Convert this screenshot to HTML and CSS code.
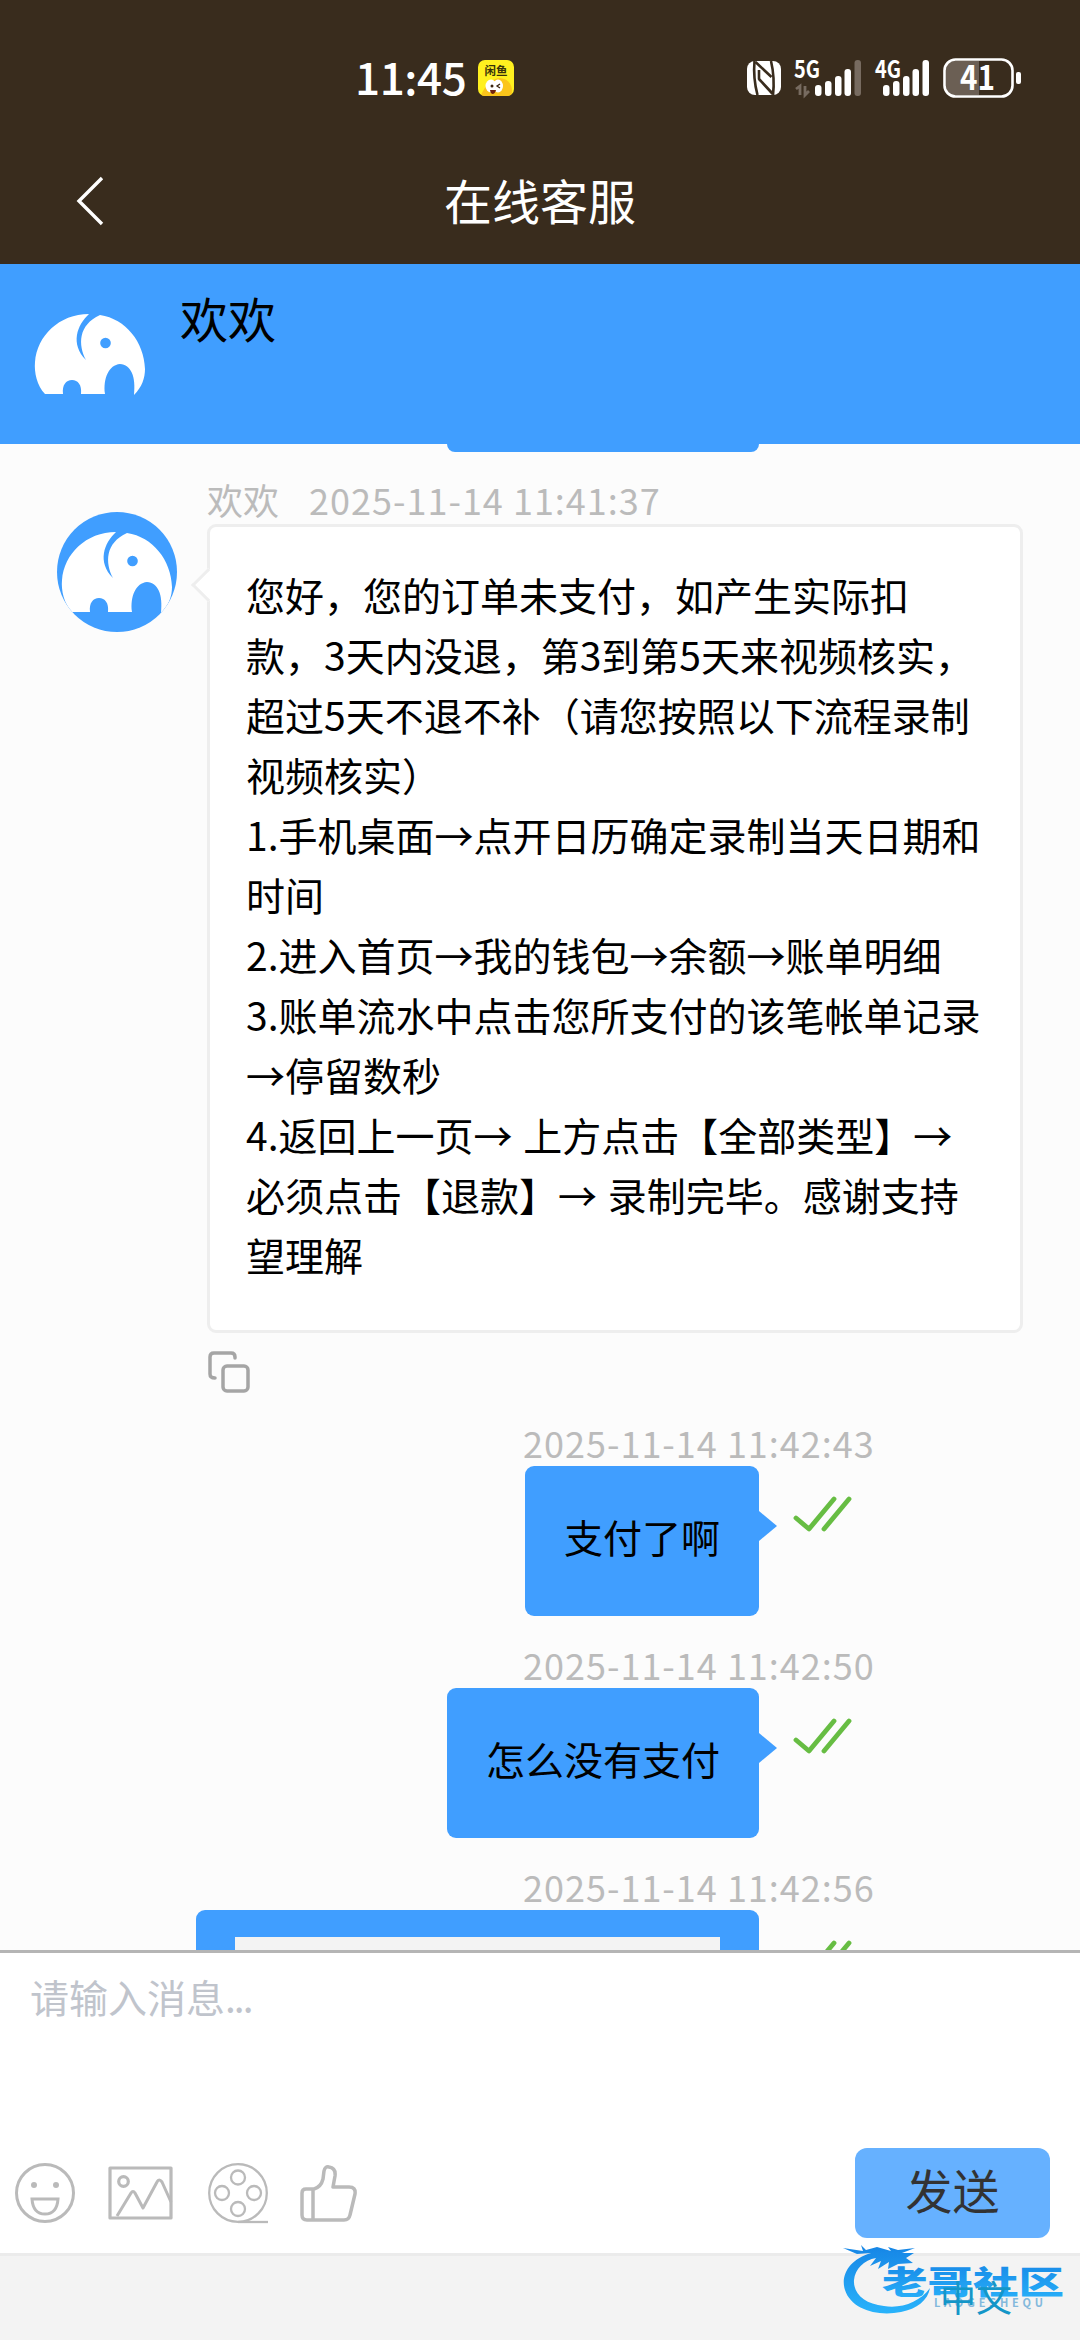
FILE: index.html
```html
<!DOCTYPE html>
<html lang="zh-CN">
  <head>
    <meta charset="UTF-8" />
    <meta name="viewport" content="width=device-width, initial-scale=1.0" />
    <title>在线客服</title>
    <link rel="stylesheet" href="styles.css">
  </head>
  <body>
    <svg class="defs" aria-hidden="true">
      <symbol id="elephant" viewBox="0 0 120 120">
        <path fill="#fff" d="M15 100C7 92 4 78 5 68C7 42 29 20 59 20C47 31 40 50 56 66C48 51 48 31 70 21C96 25 114 48 115 75C115 84 112 93 104 101C106 82 101 71 90 70C79 71 73 84 75 100H51C52 91 48 86 42 86C36 86 32 91 33 100Z"/>
        <circle cx="75.500" cy="49" r="5.300" fill="#409eff"/>
      </symbol>
      <symbol id="checks" viewBox="0 0 60 38">
        <path d="M4 23L17 34L42 4M32 34L57 4" fill="none" stroke="#67bd43" stroke-width="4.800" stroke-linecap="round" stroke-linejoin="round"/>
      </symbol>
    </svg>

    <div class="phone">
      <header class="top">
        <div class="status">
          <span class="status__time">11:45</span>
          <span class="status__app">
            <b>闲鱼</b>
            <svg viewBox="0 0 36 20">
              <path d="M2 20C7 9 12 2 22 1C32 2 36 10 33 20Z" fill="#fbc51b"/>
              <ellipse cx="13" cy="9" rx="5.500" ry="6.500" fill="#fff"/>
              <ellipse cx="20" cy="9" rx="5" ry="6.500" fill="#fff"/>
              <circle cx="14" cy="9" r="1.500" fill="#3b2410"/>
              <path d="M22 7L19 9L22 11" fill="none" stroke="#3b2410" stroke-width="1.300"/>
              <path d="M12 13H18Q17 17 14.500 17Q12 16 12 13Z" fill="#72240f"/>
            </svg>
          </span>
          <svg class="status__icons" viewBox="0 0 280 44">
            <rect x="2" y="5" width="34" height="34" rx="8" fill="#fff"/>
            <g fill="none" stroke="#392c1d" stroke-width="2.600" stroke-linejoin="round">
              <path d="M9.500 5Q8 22 12.500 39"/>
              <path d="M26 5Q30 22 28 39"/>
              <path d="M10.500 6L26.500 21M14 14V23L27.500 38M14 23L27 37" />
            </g>
            <text x="49" y="22" class="net" textLength="26" lengthAdjust="spacingAndGlyphs">5G</text>
            <path d="M51 33L55 30V39M60 30V39L64 35" fill="none" stroke="#776b60" stroke-width="2.800"/>
            <g fill="#fff">
              <rect x="70" y="29" width="6.500" height="11" rx="3"/>
              <rect x="80" y="25" width="6.500" height="15" rx="3"/>
              <rect x="90" y="20" width="6.500" height="20" rx="3"/>
              <rect x="99.500" y="13" width="6.500" height="27" rx="3"/>
              <rect x="109.500" y="4" width="6.500" height="36" rx="3" fill="#776b60"/>
            </g>
            <text x="130" y="22" class="net" textLength="26" lengthAdjust="spacingAndGlyphs">4G</text>
            <g fill="#fff">
              <rect x="138" y="29" width="6.500" height="11" rx="3"/>
              <rect x="148" y="25" width="6.500" height="15" rx="3"/>
              <rect x="158" y="20" width="6.500" height="20" rx="3"/>
              <rect x="167.500" y="13" width="6.500" height="27" rx="3"/>
              <rect x="177.500" y="4" width="6.500" height="36" rx="3"/>
            </g>
            <path d="M234 5H209Q201 5 201 14V30Q201 39 209 39H234Z" fill="#6b5f54"/>
            <rect x="199.500" y="3.500" width="68" height="37" rx="11" fill="none" stroke="#fff" stroke-width="2.600"/>
            <rect x="271" y="16" width="5" height="12" rx="2" fill="#fff"/>
            <text x="215" y="34" class="level" textLength="35" lengthAdjust="spacingAndGlyphs">41</text>
          </svg>
        </div>
        <div class="title">
          <svg class="title__back" viewBox="0 0 30 52"><path d="M27 3L4 26L27 49" fill="none" stroke="#fff" stroke-width="3.400"/></svg>
          <h1>在线客服</h1>
        </div>
      </header>

      <section class="agent">
        <svg class="agent__avatar"><use href="#elephant"/></svg>
        <div class="agent__name">欢欢</div>
      </section>

      <main class="chat">
        <div class="bubble bubble_tail"></div>

        <div class="msg msg_in">
          <svg class="msg__avatar"><use href="#elephant"/></svg>
          <div class="msg__body">
            <div class="msg__meta"><span>欢欢</span><time>2025-11-14 11:41:37</time></div>
            <div class="bubble bubble_in">您好，您的订单未支付，如产生实际扣<br>款，3天内没退，第3到第5天来视频核实，<br>超过5天不退不补（请您按照以下流程录制<br>视频核实）<br>1.手机桌面→点开日历确定录制当天日期和<br>时间<br>2.进入首页→我的钱包→余额→账单明细<br>3.账单流水中点击您所支付的该笔帐单记录<br>→停留数秒<br>4.返回上一页→ 上方点击【全部类型】→<br>必须点击【退款】→ 录制完毕。感谢支持<br>望理解</div>
            <svg class="msg__copy" viewBox="0 0 42 42" fill="none" stroke="#a5a5a5" stroke-width="3.500" stroke-linecap="round">
              <path d="M27 7V6Q27 2 23 2H6Q2 2 2 6V23Q2 27 7 27"/>
              <rect x="15" y="15" width="25" height="25" rx="4"/>
            </svg>
          </div>
        </div>

        <div class="msg msg_out">
          <time>2025-11-14 11:42:43</time>
          <div class="msg__row">
            <div class="bubble bubble_out">支付了啊</div>
            <svg class="msg__checks"><use href="#checks"/></svg>
          </div>
        </div>

        <div class="msg msg_out">
          <time>2025-11-14 11:42:50</time>
          <div class="msg__row">
            <div class="bubble bubble_out">怎么没有支付</div>
            <svg class="msg__checks"><use href="#checks"/></svg>
          </div>
        </div>

        <div class="msg msg_out">
          <time>2025-11-14 11:42:56</time>
          <div class="msg__row">
            <div class="bubble bubble_out bubble_image"><div class="shot"></div></div>
            <svg class="msg__checks"><use href="#checks"/></svg>
          </div>
        </div>
      </main>

      <section class="editor">
        <div class="editor__text">请输入消息<span>...</span></div>
        <div class="tools">
          <svg class="tools__smile" viewBox="0 0 60 60" fill="none" stroke="#bababa" stroke-width="3">
            <circle cx="30" cy="30" r="28.500"/>
            <path d="M17 36H43Q42 51 30 51Q18 51 17 36Z"/>
            <circle cx="19" cy="22" r="3" fill="#bababa" stroke="none"/>
            <circle cx="41" cy="22" r="3" fill="#bababa" stroke="none"/>
          </svg>
          <svg class="tools__image" viewBox="0 0 65 54" fill="none" stroke="#bababa" stroke-width="3.200" stroke-linejoin="round">
            <rect x="2" y="2" width="61" height="50"/>
            <circle cx="15.500" cy="15.500" r="4.800"/>
            <path d="M9 50L23 27Q25 24 27 27L35 42L49 16Q51 12 54 16L63 36" stroke-width="3"/>
          </svg>
          <svg class="tools__reel" viewBox="0 0 60 61" fill="none" stroke="#bababa" stroke-width="2.300">
            <circle cx="30" cy="30" r="28.800"/>
            <circle cx="30" cy="14.500" r="7"/>
            <circle cx="14" cy="30" r="7"/>
            <circle cx="46" cy="30" r="7"/>
            <circle cx="30" cy="46" r="7"/>
            <path d="M30 59H60"/>
          </svg>
          <svg class="tools__like" viewBox="0 0 57 58" fill="none" stroke="#bababa" stroke-width="3.500" stroke-linejoin="round">
            <path d="M6 25H14Q21 23 23 15L24 7Q25 2 29 3Q36 4 35 12L33 23H49Q56 23 55 30L50 51Q49 56 44 56H7Q2 56 2 51V29Q2 25 6 25ZM13 25V56"/>
          </svg>
          <button class="send" type="button">发送</button>
        </div>
      </section>

      <footer class="lang">
        <svg class="brand" viewBox="0 0 230 76">
          <defs>
            <linearGradient id="blue" x1="0" y1="0" x2="0" y2="1">
              <stop offset="0" stop-color="#1685e5"/>
              <stop offset="1" stop-color="#29b3fb"/>
            </linearGradient>
          </defs>
          <path fill="url(#blue)" d="M31 9C10 15 0 31 5 46C11 65 37 73 61 68C77 65 88 56 90 44C80 58 61 65 44 62C24 60 13 49 14 36C15 25 24 16 36 14L30 22L41 17L38 25L49 18L48 25L58 20L73 19L66 14L74 9L62 9L75 4L58 6L48 3L51 7L37 3L26 6L21 1L23 7L3 4L17 10Z"/>
          <text class="brand__cn" x="42" y="72" transform="scale(1 0.700)" textLength="182" lengthAdjust="spacingAndGlyphs" fill="url(#blue)">老哥社区</text>
          <text class="brand__en" x="94" y="63" textLength="109">LAOGESHEQU</text>
        </svg>
        <span class="lang__name">中文</span>
      </footer>
    </div>
  </body>
</html>
```
FILE: styles.css
```css
* {
  box-sizing: border-box;
}
body {
  margin: 0;
  font-family: "Noto Sans CJK SC", sans-serif;
  color: #000;
}
svg {
  display: block;
  flex: none;
}
.defs {
  position: absolute;
  width: 0;
  height: 0;
}
.phone {
  display: flex;
  flex-direction: column;
  width: 1080px;
  height: 2340px;
  overflow: hidden;
  background: #fff;
}

.top {
  flex: none;
  height: 264px;
  background: #392c1d;
  color: #fff;
}
.status {
  display: flex;
  align-items: center;
  height: 156px;
  padding-left: 355px;
}
.status__time {
  width: 123px;
  margin-top: -4px;
  font-size: 44px;
  font-weight: 500;
  line-height: 60px;
  letter-spacing: -0.4px;
}
.status__app {
  width: 36px;
  height: 36px;
  border-radius: 7px;
  overflow: hidden;
  background: #fff01f;
  color: #38330b;
  text-align: center;
}
.status__app b {
  display: block;
  height: 17px;
  font-size: 11.5px;
  line-height: 20px;
}
.status__icons {
  width: 280px;
  height: 44px;
  margin-left: 231px;
}
.net,
.level {
  fill: #fff;
  font-size: 24px;
  font-weight: 700;
}
.level {
  font-size: 33px;
}
.title {
  display: grid;
  grid-template-columns: 180px 1fr 180px;
  align-items: center;
  height: 90px;
}
.title__back {
  width: 30px;
  height: 52px;
  margin-left: 75px;
}
.title h1 {
  margin: -5px 0 0;
  font-size: 48px;
  font-weight: 400;
  line-height: 70px;
  text-align: center;
}

.agent {
  display: flex;
  flex: none;
  height: 180px;
  padding: 30px;
  background: #409eff;
}
.agent__avatar {
  width: 120px;
  height: 120px;
}
.agent__name {
  margin: -12px 0 0 30px;
  font-size: 48px;
  line-height: 70px;
}

.chat {
  flex: none;
  height: 1506px;
  overflow: hidden;
  background: #fcfcfc;
}
.bubble {
  position: relative;
  border-radius: 9px;
  font-size: 39px;
  line-height: 60px;
  white-space: nowrap;
}
.bubble_tail {
  width: 312px;
  height: 8px;
  margin-left: 447px;
  border-radius: 0 0 9px 9px;
  background: #409eff;
}
.msg_in {
  display: flex;
  height: 968px;
  padding: 24px 0 0 57px;
}
.msg__avatar {
  width: 120px;
  height: 120px;
  margin-top: 36px;
  border-radius: 50%;
  background: #409eff;
}
.msg__body {
  margin-left: 30px;
}
.msg__meta {
  display: flex;
  gap: 30px;
  height: 48px;
  color: #bbb;
  font-size: 36px;
  line-height: 47px;
}
time {
  letter-spacing: 1px;
}
.bubble_in {
  width: 816px;
  height: 809px;
  padding: 37px 36px;
  border: 3px solid #eee;
  background: #fff;
  word-spacing: 2px;
}
.bubble_in::before {
  content: '';
  position: absolute;
  left: -14px;
  top: 46px;
  width: 21px;
  height: 21px;
  border: solid #eee;
  border-width: 0 0 3px 3px;
  background: #fff;
  transform: rotate(45deg);
}
.msg__copy {
  width: 42px;
  height: 42px;
  margin: 18px 0 0 1px;
}
.msg_out {
  height: 222px;
}
.msg_out time {
  display: block;
  height: 46px;
  margin-left: 523px;
  color: #bbb;
  font-size: 36px;
  line-height: 44px;
}
.msg__row {
  display: flex;
  justify-content: flex-end;
  padding-right: 228px;
}
.bubble_out {
  height: 150px;
  padding: 40px 39px;
  background: #409eff;
}
.bubble_out::after {
  content: '';
  position: absolute;
  left: 100%;
  top: 45px;
  border: 15px solid transparent;
  border-width: 15px 0 15px 18px;
  border-left-color: #409eff;
}
.bubble_image {
  padding: 27px 39px 0;
}
.shot {
  width: 485px;
  height: 123px;
  background: #f3f3f3;
}
.msg__checks {
  width: 60px;
  height: 38px;
  margin: 29px 0 0 33px;
}

.editor {
  flex: none;
  height: 306px;
  padding: 18px 30px 0 15px;
  border-top: 3px solid #b5b5b5;
  border-bottom: 3px solid #ebebeb;
  background: #fff;
}
.editor__text {
  height: 177px;
  padding-left: 15px;
  color: #c0c4cc;
  font-size: 39px;
  line-height: 50px;
}
.editor__text span {
  letter-spacing: -2px;
}
.tools {
  display: flex;
  align-items: center;
  height: 90px;
}
.tools__smile {
  width: 60px;
  height: 60px;
}
.tools__image {
  width: 65px;
  height: 54px;
  margin-left: 33px;
}
.tools__reel {
  width: 60px;
  height: 61px;
  margin-left: 35px;
}
.tools__like {
  width: 57px;
  height: 58px;
  margin-left: 32px;
}
.send {
  width: 195px;
  height: 90px;
  margin-left: auto;
  padding: 0 0 9px;
  border: 0;
  border-radius: 12px;
  background: #66b1ff;
  color: #333;
  font: 47px/80px "Noto Sans CJK SC", sans-serif;
}

.lang {
  position: relative;
  flex: 1;
  padding: 13px 0 0 940px;
  background: #f3f3f3;
  color: #1496c8;
  font-size: 36px;
  line-height: 54px;
}
.lang__name {
  position: relative;
}
/* logo lies over the edge of the editor, under the language link */
.brand {
  position: absolute;
  left: 840px;
  top: -12px;
  width: 230px;
  height: 76px;
}
.brand__cn {
  font-size: 45px;
  font-weight: 900;
}
.brand__en {
  fill: #83b9dc;
  font-size: 11px;
  font-weight: 700;
}
```
